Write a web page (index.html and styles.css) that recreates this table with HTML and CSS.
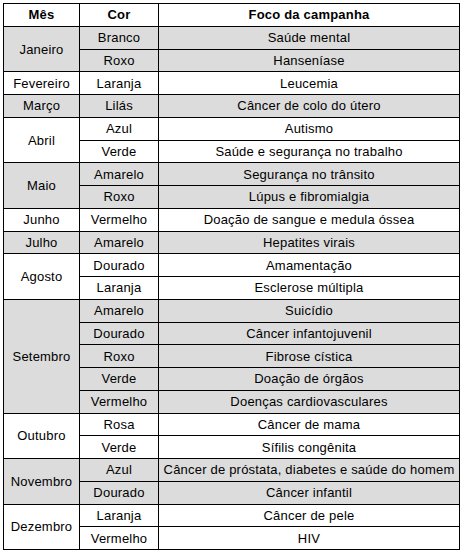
FILE: index.html
```html
<!DOCTYPE html>
<html lang="pt">
<head>
<meta charset="utf-8">
<link rel="stylesheet" href="styles.css">
</head>
<body>
<table class="tabela">
  <colgroup>
    <col class="c-mes">
    <col class="c-cor">
    <col class="c-foco">
  </colgroup>
  <thead>
    <tr><th>Mês</th><th>Cor</th><th>Foco da campanha</th></tr>
  </thead>
  <tbody class="g">
    <tr><td rowspan="2">Janeiro</td><td>Branco</td><td>Saúde mental</td></tr>
    <tr><td>Roxo</td><td>Hanseníase</td></tr>
  </tbody>
  <tbody>
    <tr><td>Fevereiro</td><td>Laranja</td><td>Leucemia</td></tr>
  </tbody>
  <tbody class="g">
    <tr><td>Março</td><td>Lilás</td><td>Câncer de colo do útero</td></tr>
  </tbody>
  <tbody>
    <tr><td rowspan="2">Abril</td><td>Azul</td><td>Autismo</td></tr>
    <tr><td>Verde</td><td>Saúde e segurança no trabalho</td></tr>
  </tbody>
  <tbody class="g">
    <tr><td rowspan="2">Maio</td><td>Amarelo</td><td>Segurança no trânsito</td></tr>
    <tr><td>Roxo</td><td>Lúpus e fibromialgia</td></tr>
  </tbody>
  <tbody>
    <tr><td>Junho</td><td>Vermelho</td><td>Doação de sangue e medula óssea</td></tr>
  </tbody>
  <tbody class="g">
    <tr><td>Julho</td><td>Amarelo</td><td>Hepatites virais</td></tr>
  </tbody>
  <tbody>
    <tr><td rowspan="2">Agosto</td><td>Dourado</td><td>Amamentação</td></tr>
    <tr><td>Laranja</td><td>Esclerose múltipla</td></tr>
  </tbody>
  <tbody class="g">
    <tr><td rowspan="5">Setembro</td><td>Amarelo</td><td>Suicídio</td></tr>
    <tr><td>Dourado</td><td>Câncer infantojuvenil</td></tr>
    <tr><td>Roxo</td><td>Fibrose cística</td></tr>
    <tr><td>Verde</td><td>Doação de órgãos</td></tr>
    <tr><td>Vermelho</td><td>Doenças cardiovasculares</td></tr>
  </tbody>
  <tbody>
    <tr><td rowspan="2">Outubro</td><td>Rosa</td><td>Câncer de mama</td></tr>
    <tr><td>Verde</td><td>Sífilis congênita</td></tr>
  </tbody>
  <tbody class="g">
    <tr><td rowspan="2">Novembro</td><td>Azul</td><td>Câncer de próstata, diabetes e saúde do homem</td></tr>
    <tr><td>Dourado</td><td>Câncer infantil</td></tr>
  </tbody>
  <tbody>
    <tr><td rowspan="2">Dezembro</td><td>Laranja</td><td>Câncer de pele</td></tr>
    <tr><td>Vermelho</td><td>HIV</td></tr>
  </tbody>
</table>
</body>
</html>
```
FILE: styles.css
```css
html, body {
  margin: 0;
  padding: 0;
  background: #ffffff;
}
body {
  padding: 3px;
  font-family: "Liberation Sans", Arial, sans-serif;
  font-size: 13px;
  color: #000000;
}
.tabela {
  border-collapse: collapse;
  width: 457px;
  table-layout: fixed;
}
.c-mes { width: 76px; }
.c-cor { width: 79px; }
.c-foco { width: 301px; }
.tabela th,
.tabela td {
  border: 1px solid #000000;
  text-align: center;
  vertical-align: middle;
  padding: 0;
  height: 21.75px;
  line-height: 15px;
  white-space: nowrap;
  letter-spacing: 0.2px;
}
.tabela th {
  font-weight: bold;
}
.tabela .g td {
  background: #dcdcdc;
}
```
